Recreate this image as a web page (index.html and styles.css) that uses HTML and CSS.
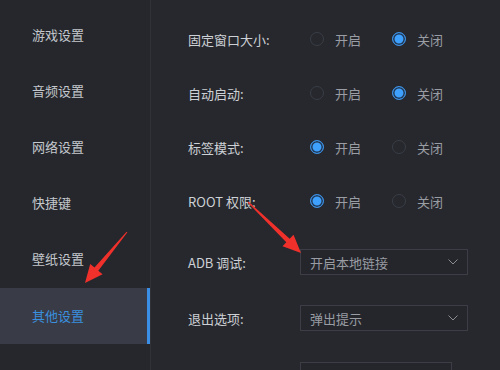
FILE: index.html
```html
<!DOCTYPE html>
<html lang="zh-CN">
<head>
<meta charset="utf-8">
<link rel="stylesheet" href="styles.css">
</head>
<body>
<div class="app">
  <nav class="sidebar">
    <div class="nav-item">游戏设置</div>
    <div class="nav-item">音频设置</div>
    <div class="nav-item">网络设置</div>
    <div class="nav-item">快捷键</div>
    <div class="nav-item">壁纸设置</div>
    <div class="nav-item active">其他设置</div>
  </nav>
  <main class="main">
    <div class="row">
      <div class="label">固定窗口大小:</div>
      <div class="radios">
        <div class="opt"><span class="radio"></span><span class="opt-text">开启</span></div>
        <div class="opt"><span class="radio checked"></span><span class="opt-text">关闭</span></div>
      </div>
    </div>
    <div class="row">
      <div class="label">自动启动:</div>
      <div class="radios">
        <div class="opt"><span class="radio"></span><span class="opt-text">开启</span></div>
        <div class="opt"><span class="radio checked"></span><span class="opt-text">关闭</span></div>
      </div>
    </div>
    <div class="row">
      <div class="label">标签模式:</div>
      <div class="radios">
        <div class="opt"><span class="radio checked"></span><span class="opt-text">开启</span></div>
        <div class="opt"><span class="radio"></span><span class="opt-text">关闭</span></div>
      </div>
    </div>
    <div class="row">
      <div class="label">ROOT 权限:</div>
      <div class="radios">
        <div class="opt"><span class="radio checked"></span><span class="opt-text">开启</span></div>
        <div class="opt"><span class="radio"></span><span class="opt-text">关闭</span></div>
      </div>
    </div>
    <div class="row select-row first-select">
      <div class="label">ADB 调试:</div>
      <div class="select">
        <span class="select-text">开启本地链接</span>
        <svg class="chev" width="10" height="6" viewBox="0 0 10 6"><path d="M0.5 0.5 L5 5 L9.5 0.5" fill="none" stroke="#8a8d94" stroke-width="1"/></svg>
      </div>
    </div>
    <div class="row select-row">
      <div class="label">退出选项:</div>
      <div class="select">
        <span class="select-text">弹出提示</span>
        <svg class="chev" width="10" height="6" viewBox="0 0 10 6"><path d="M0.5 0.5 L5 5 L9.5 0.5" fill="none" stroke="#8a8d94" stroke-width="1"/></svg>
      </div>
    </div>
    <div class="row select-row last-row">
      <div class="label"></div>
      <div class="select narrow"></div>
    </div>
  </main>
</div>
<svg class="arrows" width="500" height="370" viewBox="0 0 500 370">
  <polygon fill="#f0302a" points="127.4,232.3 98.3,270.7 102.6,274.2 85,283 90.2,264 94.5,267.5 126.6,231.7"/>
  <polygon fill="#f0302a" points="247.7,202.4 286.3,242.3 282.5,246.3 301,253 293.5,234.7 289.7,238.7 248.3,201.6"/>
</svg>
</body>
</html>
```

FILE: styles.css
```css
html, body {
  margin: 0;
  padding: 0;
}
body {
  width: 500px;
  height: 370px;
  overflow: hidden;
  background: #26282e;
  font-family: "Noto Sans CJK SC", "Noto Sans", sans-serif;
  font-size: 13px;
  position: relative;
}
.app {
  display: flex;
  height: 370px;
  overflow: hidden;
}
.sidebar {
  width: 150px;
  flex: none;
  border-right: 1px solid #30323a;
  background: #25272d;
  padding-top: 7px;
  box-sizing: content-box;
}
.nav-item {
  height: 56px;
  line-height: 56px;
  padding-left: 32px;
  color: #c4c7cc;
}
.nav-item.active {
  background: #393c46;
  color: #3a8fdf;
  box-shadow: inset -3px 0 0 #3a8ee6;
  margin-top: 1px;
}
.main {
  flex: 1;
  padding-top: 12px;
  padding-left: 37px;
  overflow: hidden;
}
.row {
  display: flex;
  align-items: center;
  height: 54px;
}
.select-row {
  height: 56px;
}
.first-select {
  margin-top: 6px;
}
.last-row {
  align-items: flex-start;
  padding-top: 16px;
  box-sizing: border-box;
}
.label {
  width: 112px;
  flex: none;
  color: #cdd0d4;
}
.radios {
  display: flex;
  padding-left: 10px;
}
.opt {
  width: 82px;
  display: flex;
  align-items: center;
}
.radio {
  width: 14px;
  height: 14px;
  box-sizing: border-box;
  border-radius: 50%;
  border: 1px solid #3a3d45;
  flex: none;
}
.radio.checked {
  border: 1px solid #3d8fe0;
  background: #3ea0ff;
  box-shadow: inset 0 0 0 1.5px #203550;
}
.opt-text {
  margin-left: 11px;
  color: #9a9da3;
}
.select {
  width: 168px;
  height: 26px;
  box-sizing: border-box;
  border: 1px solid #3b3e47;
  background: #24262c;
  display: flex;
  align-items: center;
  justify-content: space-between;
  padding: 0 9px 0 9px;
}
.select.narrow {
  width: 152px;
}
.select-text {
  color: #999ca2;
}
.arrows {
  position: absolute;
  left: 0;
  top: 0;
  pointer-events: none;
}
```
